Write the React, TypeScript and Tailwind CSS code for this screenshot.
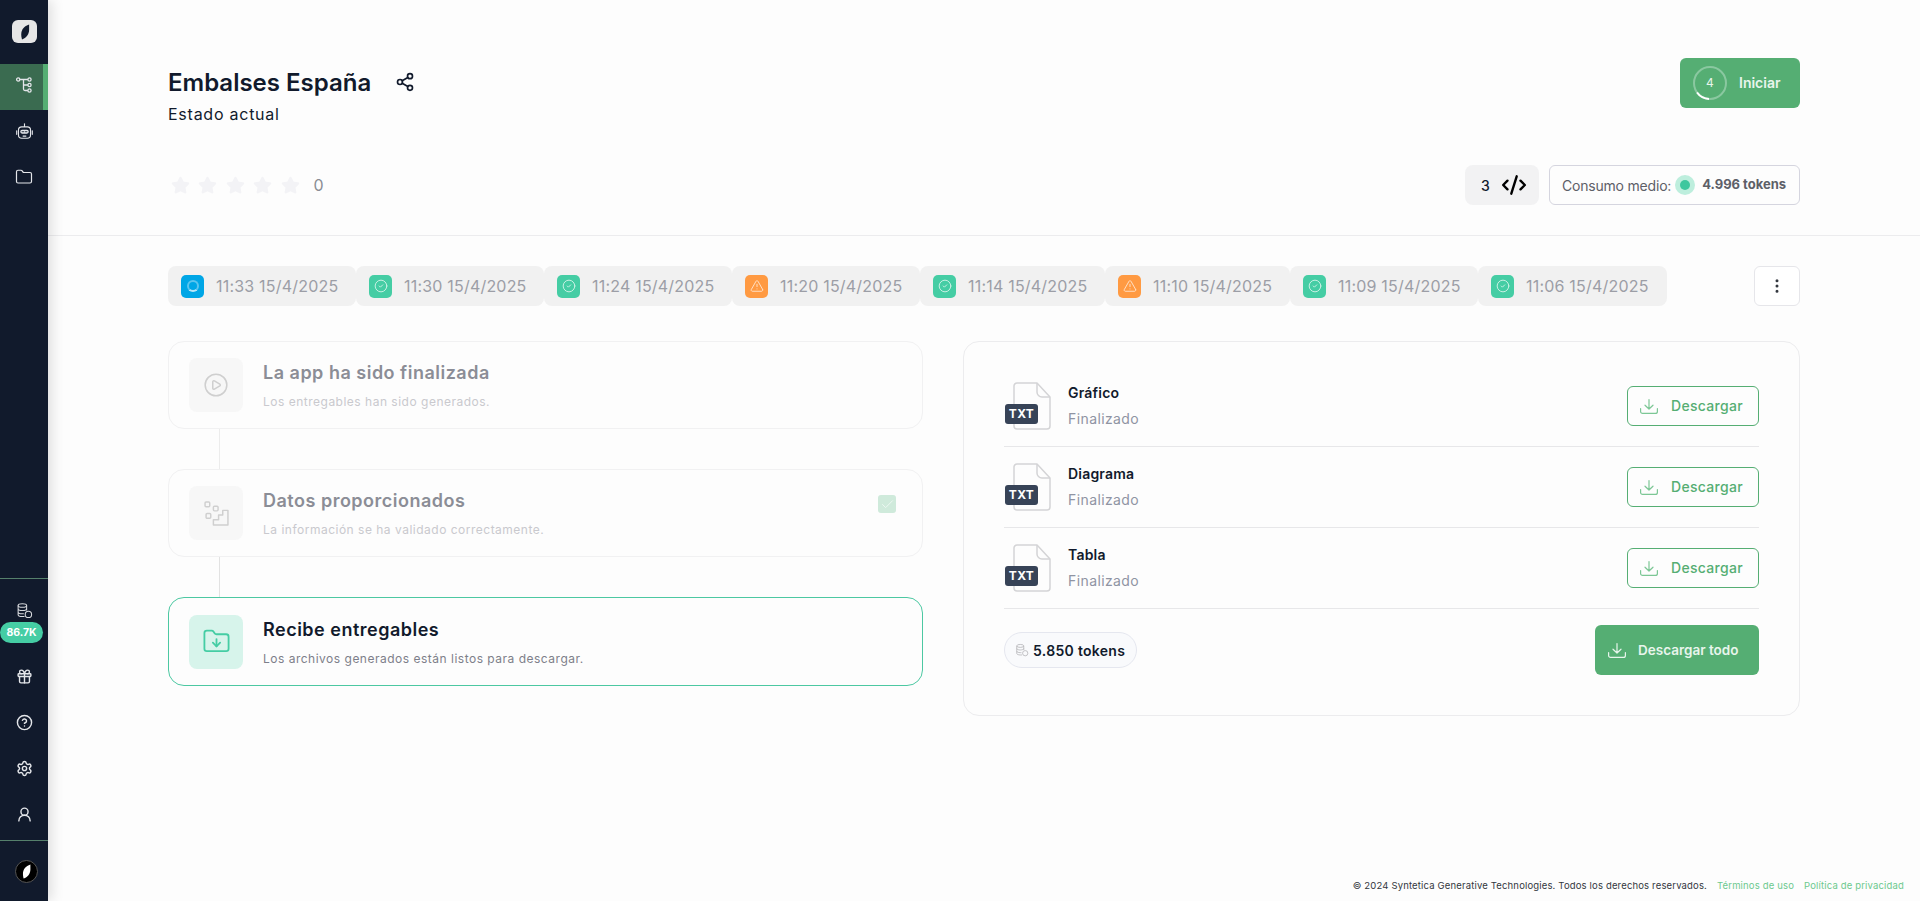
import { Check, CircleCheck, CircleHelp, CirclePlay, CodeXml, EllipsisVertical, Folder, FolderDown, Gift, Settings, Share2, Star, TriangleAlert, UserRound } from "lucide-react";

const runs = [
  { label: "11:33 15/4/2025", state: "running", width: "w-[188px]" },
  { label: "11:30 15/4/2025", state: "ok", width: "w-[188px]" },
  { label: "11:24 15/4/2025", state: "ok", width: "w-[188px]" },
  { label: "11:20 15/4/2025", state: "warn", width: "w-[188px]" },
  { label: "11:14 15/4/2025", state: "ok", width: "w-[185px]" },
  { label: "11:10 15/4/2025", state: "warn", width: "w-[185px]" },
  { label: "11:09 15/4/2025", state: "ok", width: "w-[188px]" },
  { label: "11:06 15/4/2025", state: "ok", width: "w-[189px]" },
];

const files = ["Gráfico", "Diagrama", "Tabla"];

const Leaf = ({ className = "" }: { className?: string }) => (
  <svg viewBox="0 0 24 24" className={className} fill="currentColor">
    <path d="M17.500 2C11 4 7 9 7 15c0 3 .5 5 1 7 5.500-2 9.500-7 9.500-13 0-3 0-5 0-7z" />
  </svg>
);

const FlowIcon = ({ className = "" }: { className?: string }) => (
  <svg viewBox="0 0 16 16" className={className} fill="none" stroke="currentColor" strokeWidth="1.3">
    <circle cx="2.200" cy="2.500" r="1.600" />
    <circle cx="13.500" cy="2.500" r="1.600" />
    <circle cx="13.500" cy="8" r="1.600" />
    <circle cx="13.500" cy="13.500" r="1.600" />
    <path d="M3.800 2.500h8.100M7.500 2.500v9.500a1.500 1.500 0 0 0 1.500 1.500h2.900M7.500 8h4.400" />
  </svg>
);

const BotIcon = ({ className = "" }: { className?: string }) => (
  <svg viewBox="0 0 24 24" className={className} fill="none" stroke="currentColor" strokeWidth="1.600" strokeLinecap="round">
    <path d="M12 1v4" />
    <rect x="3.500" y="5.500" width="17" height="16" rx="4.500" />
    <rect x="6" y="9.500" width="12" height="5.500" rx="2.500" fill="currentColor" stroke="none" />
    <path d="M8.500 12.300h2.500M13 12.300h2.500" stroke="#111a2c" strokeWidth="1.200" />
    <path d="M10 18.500h4M1 11v5M23 11v5" />
  </svg>
);

const CoinsIcon = ({ className = "" }: { className?: string }) => (
  <svg viewBox="0 0 24 24" className={className} fill="none" stroke="currentColor" strokeWidth="1.5">
    <ellipse cx="9" cy="5" rx="6" ry="2.500" />
    <path d="M3 5v13c0 1.400 2.700 2.500 6 2.500h3M15 5v7M3 9.500c0 1.400 2.700 2.500 6 2.500s6-1.100 6-2.500M3 14c0 1.400 2.700 2.500 6 2.500h2" />
    <circle cx="17.500" cy="17.500" r="4.500" />
  </svg>
);

const StepsIcon = ({ className = "" }: { className?: string }) => (
  <svg viewBox="0 0 24 24" className={className} fill="none" stroke="currentColor" strokeWidth="1.400" strokeLinejoin="round">
    <rect x="1" y="1" width="4.500" height="4.500" rx="1" />
    <rect x="9" y="5" width="4.500" height="4.500" rx="1" />
    <rect x="2" y="12" width="4.500" height="4.500" rx="1" />
    <path d="M23 9v14H9v-5h5v-4.500h4V9z" />
  </svg>
);

// wider than lucide's Download, short arrow over a flat tray
const DownloadIcon = ({ className = "" }: { className?: string }) => (
  <svg viewBox="0 0 18 15" className={`w-[18px] h-[15px] shrink-0 ${className}`} fill="none" stroke="currentColor" strokeWidth="1.2" strokeLinecap="round" strokeLinejoin="round">
    <path d="M9 .6v9.400M5 6.200 9 10l4-3.800" />
    <path d="M.6 9.500v2.900a2 2 0 0 0 2 2h12.800a2 2 0 0 0 2-2V9.500" />
  </svg>
);

const TxtIcon = () => (
  <div className="relative ml-[1px] w-[46px] h-[48px] shrink-0">
    <svg viewBox="0 0 38 48" className="ml-[8px] w-[38px] h-[48px]" fill="none" stroke="#d4d4d6" strokeWidth="1.5" strokeLinejoin="round">
      <path d="M4 1h20l13 14v29a3 3 0 0 1-3 3H4a3 3 0 0 1-3-3V4a3 3 0 0 1 3-3z" />
      <path d="M24 1v9a5 5 0 0 0 5 5h8" />
    </svg>
    <span className="absolute left-0 top-[22px] w-[33px] h-[20px] rounded-[3px] bg-[#374357] text-white text-[12px] font-bold leading-[20px] text-center tracking-[0.3px]">TXT</span>
  </div>
);

const StepCard = ({ icon, title, text, active = false, done = false }: { icon: React.ReactNode; title: string; text: string; active?: boolean; done?: boolean }) => (
  <div className={`flex items-center rounded-2xl border bg-[#fdfdfd] pl-[20px] pr-[26px] ${active ? "h-[89px] border-[#4cc8a2]" : "h-[88px] border-[#f1f1f2]"}`}>
    <div className={`w-[54px] h-[54px] rounded-lg flex items-center justify-center shrink-0 ${active ? "bg-[#d7f4eb] text-[#45cda4]" : "bg-[#f7f7f7] text-[#cfcfcf]"}`}>
      {icon}
    </div>
    <div className="ml-[20px] flex-1 pt-[2px]">
      <p className={`text-[18px] leading-[24px] font-semibold tracking-[0.5px] ${active ? "text-[#111a2c]" : "text-[#8b8d96]"}`}>{title}</p>
      <p className={`mt-[8px] text-[12px] leading-[18px] tracking-[0.5px] ${active ? "text-[#7d7f8a]" : "text-[#c9c9ce]"}`}>{text}</p>
    </div>
    {done && (
      <div className="-mt-[18px] w-[18px] h-[18px] rounded-[3px] bg-[#cfeadb] flex items-center justify-center">
        <Check size={15} className="text-[#eef8f2]" strokeWidth={1.5} />
      </div>
    )}
  </div>
);

const App = () => {
  return (
    <div className="flex h-screen overflow-hidden bg-[#fdfdfd] font-['Inter',sans-serif] text-[#111a2c]">
      <aside className="w-[48px] h-full shrink-0 bg-[#111a2c] text-[#e4e6ea] flex flex-col justify-between shadow-[4px_0_12px_rgba(0,0,0,0.12)] z-10">
        <div>
          <div className="pt-[20px] h-[64px]">
            <div className="ml-[12px] w-[25px] h-[23px] rounded-[6px] bg-[#e6e6e6] flex items-center justify-center text-[#111a2c]">
              <Leaf className="w-[18px] h-[18px]" />
            </div>
          </div>
          <div className="h-[46px] bg-[#3a6b50] border-r-[5px] border-[#55ae73] flex items-center pl-[16px] pb-[4px]">
            <FlowIcon className="w-[16px] h-[16px]" />
          </div>
          <div className="h-[46px] flex items-center justify-center pb-[4px]"><BotIcon className="w-[17px] h-[17px]" /></div>
          <div className="h-[46px] flex items-center justify-center pb-[4px]"><Folder size={18} strokeWidth={1.6} /></div>
        </div>
        <div>
          <div className="border-t border-[#55806b] pt-[23px] flex flex-col items-center">
            <CoinsIcon className="w-[17px] h-[17px] text-[#d6d8dc]" />
            <div className="-ml-[5px] mt-[3px] w-[43px] h-[21px] rounded-full bg-[#45cda4] text-white text-[10.500px] font-bold leading-[21px] text-center">86.7K</div>
          </div>
          <div className="mt-[10px] h-[46px] flex items-center justify-center"><Gift size={17} /></div>
          <div className="h-[46px] flex items-center justify-center"><CircleHelp size={17} /></div>
          <div className="h-[46px] flex items-center justify-center"><Settings size={17} /></div>
          <div className="h-[46px] flex items-center justify-center"><UserRound size={17} /></div>
          <div className="mt-[3px] h-[61px] border-t border-[#55806b] flex items-center pl-[15px]">
            <div className="w-[23px] h-[23px] rounded-full bg-black border border-[#555] flex items-center justify-center text-white">
              <Leaf className="w-[17px] h-[17px]" />
            </div>
          </div>
        </div>
      </aside>

      <main className="flex-1 flex flex-col min-w-0">
        <header className="h-[236px] border-b border-[#ececee] px-[120px] pt-[58px]">
          <div className="flex justify-between h-[50px]">
            <div>
              <div className="flex items-center h-[48px] pt-[1px]">
                <h1 className="text-[24px] leading-[48px] font-semibold">Embalses España</h1>
                <Share2 size={20} className="ml-[24px] -mt-[2px]" />
              </div>
              <p className="text-[16px] leading-[20px] -mt-[2px] tracking-[0.75px]">Estado actual</p>
            </div>
            <button className="w-[120px] h-[50px] rounded-md bg-[#55ae73] flex items-center pl-[13px] text-[#e8f5ec]">
              <span className="relative w-[34px] h-[34px] flex items-center justify-center text-[12px]">
                <svg viewBox="0 0 34 34" className="absolute inset-0" fill="none" strokeWidth="2">
                  <circle cx="17" cy="17" r="16" stroke="#8ac8a0" />
                  <path d="M4 26.500a16 16 0 0 0 12 6.500" stroke="#ffffff" />
                </svg>
                4
              </span>
              <span className="ml-[12px] mb-[2px] text-[14px] font-semibold">Iniciar</span>
            </button>
          </div>
          <div className="mt-[57px] flex items-center justify-between h-[40px]">
            <div className="flex items-center">
              <div className="ml-[3px] flex gap-[8.400px]">
                {[0, 1, 2, 3, 4].map((i) => (
                  <Star key={i} size={19} className="text-[#f3f3f6] fill-[#f3f3f6]" />
                ))}
              </div>
              <span className="ml-[14px] text-[16px] text-[#8a8d94]">0</span>
            </div>
            <div className="flex gap-[10px]">
              <div className="w-[74px] h-[40px] rounded-lg bg-[#f2f2f3] flex items-center pl-[16px]">
                <span className="text-[14px] font-medium">3</span>
                <CodeXml size={26} strokeWidth={2.200} className="ml-[11px] text-black" />
              </div>
              <div className="w-[251px] h-[40px] rounded-md border border-[#d5d5df] flex items-center pl-[12px] text-[14px] text-[#5d6068]">
                <span className="tracking-[-0.2px]">Consumo medio:</span>
                <span className="ml-[4px] w-[20px] h-[20px] rounded-full bg-[#bdeedd] flex items-center justify-center">
                  <span className="w-[10px] h-[10px] rounded-full bg-[#3ec79e]" />
                </span>
                <span className="ml-[7px] text-[13px] font-bold">4.996 tokens</span>
              </div>
            </div>
          </div>
        </header>

        <section className="flex-1 px-[120px] pt-[30px]">
          <div className="flex items-center justify-between">
            <div className="flex">
              {runs.map((run) => (
                <div key={run.label} className={`${run.width} h-[40px] rounded-lg bg-[#f1f1f1] flex items-center pl-[13px]`}>
                  {run.state === "running" && (
                    <span className="w-[23px] h-[23px] rounded-[5px] bg-[#00a6e6] flex items-center justify-center">
                      <span className="w-[12px] h-[12px] rounded-full border-2 border-[#5cc5ef] border-b-[#b9e6f8]" />
                    </span>
                  )}
                  {run.state === "ok" && (
                    <span className="w-[23px] h-[23px] rounded-[5px] bg-[#45cda4] flex items-center justify-center">
                      <CircleCheck size={14} className="text-[#d9f5ec]" strokeWidth={1.5} />
                    </span>
                  )}
                  {run.state === "warn" && (
                    <span className="w-[23px] h-[23px] rounded-[5px] bg-[#ff9a42] flex items-center justify-center">
                      <TriangleAlert size={14} className="text-[#ffe9d6]" strokeWidth={1.5} />
                    </span>
                  )}
                  <span className="ml-[12px] text-[16px] text-[#9c9ea6] whitespace-nowrap tracking-[0.2px]">{run.label}</span>
                </div>
              ))}
            </div>
            <button className="w-[46px] h-[40px] rounded-md border border-[#e6e6ea] bg-white flex items-center justify-center">
              <EllipsisVertical size={18} className="text-[#33373f]" />
            </button>
          </div>

          <div className="mt-[35px] flex justify-between items-start">
            <div className="w-[755px]">
              <StepCard
                icon={<CirclePlay size={26} strokeWidth={1.4} />}
                title="La app ha sido finalizada"
                text="Los entregables han sido generados."
              />
              <div className="ml-[51px] w-px h-[40px] bg-[#ececec]" />
              <StepCard
                icon={<StepsIcon className="w-[25px] h-[25px]" />}
                title="Datos proporcionados"
                text="La información se ha validado correctamente."
                done
              />
              <div className="ml-[51px] w-px h-[40px] bg-[#e2e2e2]" />
              <StepCard
                icon={<FolderDown size={29} strokeWidth={1.5} />}
                title="Recibe entregables"
                text="Los archivos generados están listos para descargar."
                active
              />
            </div>

            <div className="w-[837px] h-[375px] rounded-2xl border border-[#ececee] bg-[#fdfdfd] px-[40px] pt-[24px]">
              {files.map((file) => (
                <div key={file} className="h-[81px] border-b border-[#e7e7e9] flex items-center justify-between">
                  <div className="flex items-center">
                    <TxtIcon />
                    <div className="ml-[17px]">
                      <p className="text-[14px] leading-[20px] font-semibold tracking-[0.2px]">{file}</p>
                      <p className="mt-[6px] text-[14px] leading-[20px] text-[#8f94a3] tracking-[0.4px]">Finalizado</p>
                    </div>
                  </div>
                  <button className="w-[132px] h-[40px] rounded-md border border-[#55ae73] flex items-center pl-[12px] text-[14px] font-medium text-[#55ae73]">
                    <DownloadIcon className="text-[#7cc795]" />
                    <span className="ml-[13px] mb-[1px] tracking-[0.3px]">Descargar</span>
                  </button>
                </div>
              ))}
              <div className="mt-[16px] flex items-center justify-between">
                <div className="w-[133px] h-[36px] rounded-full border border-[#e5e7ef] bg-[#f9fafc] flex items-center pl-[10px]">
                  <CoinsIcon className="w-[14px] h-[14px] text-[#b9b9bd]" />
                  <span className="ml-[4px] text-[14px] font-semibold tracking-[0.3px]">5.850 tokens</span>
                </div>
                <button className="w-[164px] h-[50px] rounded-md bg-[#55ae73] flex items-center pl-[13px] text-[13.500px] font-semibold text-[#e8f5ec]">
                  <DownloadIcon />
                  <span className="ml-[12px]">Descargar todo</span>
                </button>
              </div>
            </div>
          </div>
        </section>

        <footer className="h-[22px] pr-[16px] flex justify-end gap-[10px] text-[9.500px] leading-[14px] tracking-[0.16px]">
          <span className="text-[#333740]">© 2024 Syntetica Generative Technologies. Todos los derechos reservados.</span>
          <span className="text-[#6cc98e]">Términos de uso</span>
          <span className="text-[#6cc98e]">Política de privacidad</span>
        </footer>
      </main>
    </div>
  );
};

export default App;
